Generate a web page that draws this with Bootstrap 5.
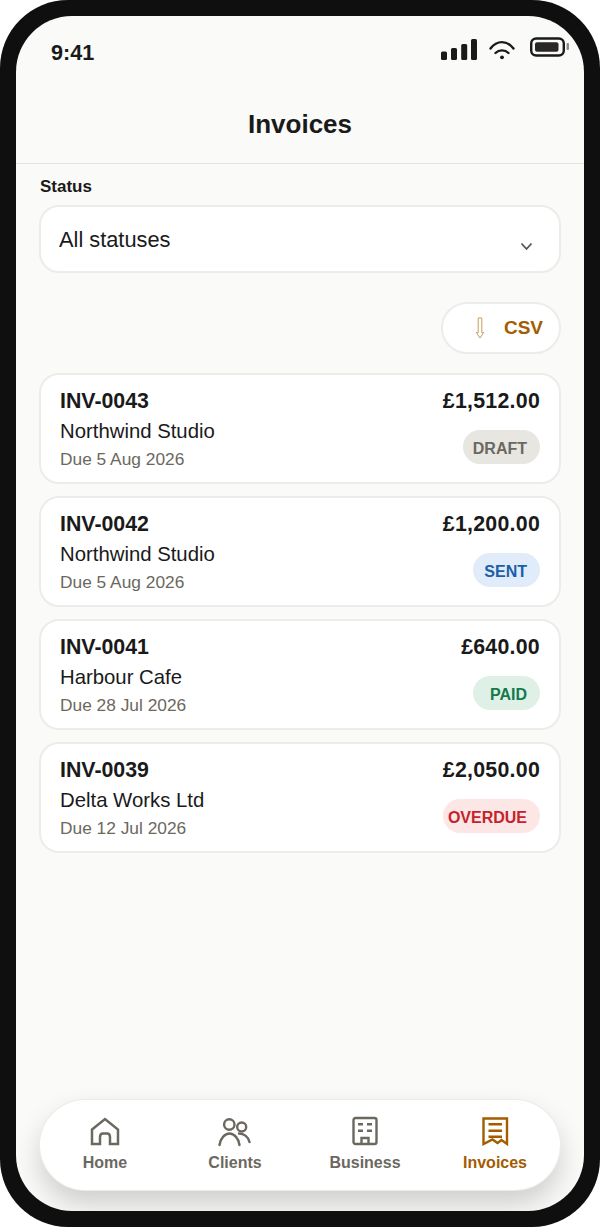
<!DOCTYPE html>
<html lang="en">
<head>
    <meta charset="UTF-8">
    <meta name="viewport" content="width=device-width, initial-scale=1.0">
    <title>Invoices</title>
    <link rel="stylesheet" href="https://cdn.jsdelivr.net/npm/bootstrap@5.3.0/dist/css/bootstrap.min.css">
    <script src="https://cdn.jsdelivr.net/npm/bootstrap@5.3.0/dist/js/bootstrap.bundle.min.js"></script>
    <style>
        html, body {
            height: 100%;
            background: #fff;
            font-family: "Liberation Sans", Arial, sans-serif;
            color: #1a1a1a;
        }
        .phone-frame {
            width: 600px;
            height: 1227px;
            padding: 16px;
            background: #0f0f0f;
            border-radius: 68px;
        }
        .phone-screen {
            height: 100%;
            background: #fafaf8;
            border-radius: 56px;
            overflow: hidden;
        }
        .status-row {
            height: 74px;
            padding: 19px 14px 0 35px;
        }
        .clock {
            font-size: 21.6px;
            font-weight: 700;
            line-height: 30px;
            padding-top: 3px;
        }
        .wifi-icon { margin: 0 15px 0 12px; }
        .page-head {
            height: 74px;
            padding-bottom: 4px;
            border-bottom: 1px solid #e4e3df;
        }
        .page-head h1 {
            font-size: 26px;
            font-weight: 700;
            margin: 0;
        }
        .page-body { padding: 13px 23px 0; }
        .field-label {
            font-size: 17px;
            font-weight: 700;
            line-height: 20px;
            margin: 0 0 8px 1px;
        }
        .status-select {
            height: 68px;
            padding: 3px 40px 0 18px;
            font-size: 21.8px;
            color: #1a1a1a;
            border: 2px solid #eeece8;
            border-radius: 20px;
            background-size: 13px 9px;
            background-position: right 26px top 35px;
            background-image: url("data:image/svg+xml,%3csvg xmlns='http://www.w3.org/2000/svg' viewBox='0 0 13 9'%3e%3cpath fill='none' stroke='%23555' stroke-width='1.8' d='M1.5 1.5l5 5.5 5-5.5'/%3e%3c/svg%3e");
        }
        .csv-row { margin: 29px 0 19px; }
        .csv-btn {
            width: 120px;
            height: 52px;
            padding: 0 16px 0 0;
            gap: 18px;
            font-size: 19px;
            font-weight: 700;
            color: #a35c00;
            background: #fff;
            border: 2px solid #eeece8;
            border-radius: 26px;
        }
        .invoice-list { gap: 12px; }
        .inv-card {
            height: 111px;
            border: 2px solid #eeece8;
            border-radius: 20px;
            background: #fff;
        }
        .inv-card .card-body { padding: 13px 19px 0; }
        .inv-num, .inv-total {
            font-size: 21.33px;
            font-weight: 700;
            line-height: 26px;
        }
        .inv-total { letter-spacing: .25px; }
        .inv-client {
            font-size: 20.33px;
            line-height: 24px;
            margin-top: 5px;
        }
        .inv-due {
            font-size: 17.33px;
            line-height: 20px;
            margin-top: 6px;
            color: #6b6860;
        }
        .status-pill {
            height: 34px;
            margin-top: 16px;
            padding-right: 13px;
            border-radius: 17px;
            font-size: 16px;
            font-weight: 700;
            line-height: 38px;
            text-align: right;
        }
        .pill-draft { width: 77px; background: #e8e6e1; color: #6b6860; }
        .pill-sent { width: 67px; background: #e1ecfa; color: #1a5fa8; }
        .pill-paid { width: 67px; background: #dff1e6; color: #15794d; }
        .pill-overdue { width: 97px; background: #fce6e6; color: #c5222b; }
        .tab-bar {
            height: 90px;
            margin: 0 24px 21px;
            background: #fff;
            border-radius: 45px;
            box-shadow: 0 0 0 1px #ecebe7, 0 14px 28px rgba(0, 0, 0, .18);
        }
        .tab-item {
            width: 130px;
            padding-top: 16px;
            font-size: 16px;
            font-weight: 700;
            color: #6b6860;
            text-decoration: none;
        }
        .tab-item svg { display: block; margin-bottom: 5px; }
        .tab-item span { line-height: 20px; }
        .tab-active { color: #a35c00; }
    </style>
</head>
<body class="m-0">
    <div class="phone-frame">
        <div class="phone-screen d-flex flex-column">
            <div class="status-row d-flex justify-content-between align-items-start">
                <div class="clock">9:41</div>
                <div class="d-flex align-items-start">
                    <svg width="36" height="30" viewBox="0 0 36 30" fill="#1a1a1a">
                        <rect x="0" y="16.5" width="6" height="8.5" rx="1.5"/>
                        <rect x="10" y="13" width="6" height="12" rx="1.5"/>
                        <rect x="20.2" y="9" width="6" height="16" rx="1.5"/>
                        <rect x="30" y="4" width="6" height="21" rx="1.5"/>
                    </svg>
                    <svg class="wifi-icon" width="26" height="30" viewBox="0 0 26 30" fill="none" stroke="#1a1a1a" stroke-width="2.4" stroke-linecap="round">
                        <path d="M1.5 13.5C8 5 18 5 24.5 13.5"/>
                        <path d="M6.5 18C10 14.5 16 14.5 19.5 18"/>
                        <circle cx="13" cy="22.3" r="1.9" fill="#1a1a1a" stroke="none"/>
                    </svg>
                    <svg width="40" height="30" viewBox="0 0 40 30">
                        <rect x="1.2" y="3.5" width="32.6" height="17" rx="5" fill="none" stroke="#1a1a1a" stroke-width="2.4"/>
                        <rect x="5" y="7.3" width="23.5" height="9.4" rx="2" fill="#2a2624"/>
                        <rect x="36.5" y="8" width="2.5" height="7" rx="1" fill="#8b8b8b"/>
                    </svg>
                </div>
            </div>

            <div class="page-head d-flex align-items-center justify-content-center">
                <h1>Invoices</h1>
            </div>

            <div class="page-body flex-grow-1">
                <label class="field-label d-block" for="statusFilter">Status</label>
                <select id="statusFilter" class="form-select status-select">
                    <option>All statuses</option>
                </select>

                <div class="csv-row d-flex justify-content-end">
                    <button class="btn csv-btn d-flex align-items-center justify-content-end" type="button">
                        <svg width="12" height="22" viewBox="0 0 12 22" fill="none" stroke="#c99a5c" stroke-width="1">
                            <path d="M4.2 1H7.8V15.5H9.7L6 21L2.3 15.5H4.2Z"/>
                        </svg>
                        <span>CSV</span>
                    </button>
                </div>

                <div class="d-flex flex-column invoice-list" id="invoiceList"></div>
            </div>

            <nav class="tab-bar d-flex">
                <a class="tab-item d-flex flex-column align-items-center" href="#">
                    <svg width="32" height="32" viewBox="0 0 32 32" fill="none" stroke="currentColor" stroke-width="2.5">
                        <path d="M3 13.5L16 3L29 13.5V28H21V21C21 18.5 19.5 17.5 18 17.5H14C12.5 17.5 11 18.5 11 21V28H3Z"/>
                    </svg>
                    <span>Home</span>
                </a>
                <a class="tab-item d-flex flex-column align-items-center" href="#">
                    <svg width="36" height="32" viewBox="0 0 36 32" fill="none" stroke="currentColor" stroke-width="2.4" stroke-linecap="round">
                        <circle cx="12.3" cy="8.5" r="5.2"/>
                        <circle cx="24.7" cy="11" r="4.5"/>
                        <path d="M2.5 29C3.5 22 8 17.5 12.5 17.5S21.5 22 22.5 29"/>
                        <path d="M22 17.5C27 17.5 31.5 21 32.5 26"/>
                    </svg>
                    <span>Clients</span>
                </a>
                <a class="tab-item d-flex flex-column align-items-center" href="#">
                    <svg width="32" height="32" viewBox="0 0 32 32" fill="none" stroke="currentColor" stroke-width="2.4">
                        <rect x="4.5" y="2" width="23" height="26" rx="2"/>
                        <path d="M9 8.3H14M18 8.3H23M9 14.7H14M18 14.7H23M12.5 28V22H19.5V28"/>
                    </svg>
                    <span>Business</span>
                </a>
                <a class="tab-item tab-active d-flex flex-column align-items-center" href="#">
                    <svg width="32" height="32" viewBox="0 0 32 32" fill="none" stroke="currentColor" stroke-width="2.4">
                        <path d="M4.5 28V2.5H28V28L22.5 24L18.5 27L13.5 23.5L4.5 28Z"/>
                        <path d="M9.5 8.3H23M9.5 14.7H23M9.5 20.7H23"/>
                    </svg>
                    <span>Invoices</span>
                </a>
            </nav>
        </div>
    </div>

    <script>
        const invoices = [
            { num: "INV-0043", total: "£1,512.00", client: "Northwind Studio", due: "Due 5 Aug 2026", status: "draft" },
            { num: "INV-0042", total: "£1,200.00", client: "Northwind Studio", due: "Due 5 Aug 2026", status: "sent" },
            { num: "INV-0041", total: "£640.00", client: "Harbour Cafe", due: "Due 28 Jul 2026", status: "paid" },
            { num: "INV-0039", total: "£2,050.00", client: "Delta Works Ltd", due: "Due 12 Jul 2026", status: "overdue" }
        ];

        document.getElementById("invoiceList").innerHTML = invoices.map(inv => `
            <div class="card inv-card">
                <div class="card-body d-flex justify-content-between">
                    <div>
                        <div class="inv-num">${inv.num}</div>
                        <div class="inv-client">${inv.client}</div>
                        <div class="inv-due">${inv.due}</div>
                    </div>
                    <div class="d-flex flex-column align-items-end">
                        <div class="inv-total">${inv.total}</div>
                        <div class="status-pill pill-${inv.status}">${inv.status.toUpperCase()}</div>
                    </div>
                </div>
            </div>`).join("");
    </script>
</body>
</html>
